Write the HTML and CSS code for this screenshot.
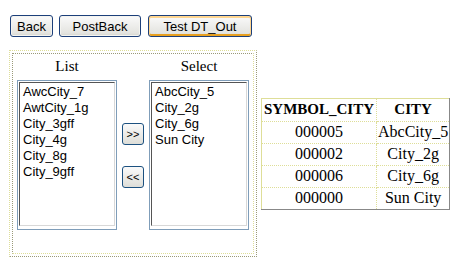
FILE: index.html
```html
<!DOCTYPE html>
<html lang="en">

<head>
    <meta charset="UTF-8">
    <title>DT_Out</title>
    <link rel="stylesheet" href="styles.css">
</head>

<body>
    <div class="toolbar">
        <button class="btn btn-back">Back</button>
        <button class="btn btn-post">PostBack</button>
        <button class="btn btn-test">Test DT_Out</button>
    </div>

    <div class="main">
        <div class="panel">
            <div class="panel-cell">
                <div class="picker">
                    <div class="column">
                        <div class="heading">List</div>
                        <div class="listbox">
                            <div class="listbox-inner">
                                <div>AwcCity_7</div>
                                <div>AwtCity_1g</div>
                                <div>City_3gff</div>
                                <div>City_4g</div>
                                <div>City_8g</div>
                                <div>City_9gff</div>
                            </div>
                        </div>
                    </div>
                    <div class="moves">
                        <button class="move">&gt;&gt;</button>
                        <button class="move">&lt;&lt;</button>
                    </div>
                    <div class="column">
                        <div class="heading">Select</div>
                        <div class="listbox">
                            <div class="listbox-inner">
                                <div>AbcCity_5</div>
                                <div>City_2g</div>
                                <div>City_6g</div>
                                <div>Sun City</div>
                            </div>
                        </div>
                    </div>
                </div>
            </div>
        </div>

        <table class="grid">
            <tr>
                <th class="col-symbol">SYMBOL_CITY</th>
                <th class="col-city">CITY</th>
            </tr>
            <tr>
                <td>000005</td>
                <td>AbcCity_5</td>
            </tr>
            <tr>
                <td>000002</td>
                <td>City_2g</td>
            </tr>
            <tr>
                <td>000006</td>
                <td>City_6g</td>
            </tr>
            <tr>
                <td>000000</td>
                <td>Sun City</td>
            </tr>
        </table>
    </div>
</body>

</html>
```

FILE: styles.css
```css
body {
    margin: 0;
    padding: 15px 0 0 10px;
    background-color: #ffffff;
    font-family: "Liberation Sans", Arial, sans-serif;
    color: #000000;
}

.toolbar {
    display: flex;
    align-items: center;
}

.btn {
    height: 22px;
    margin: 0 6px 0 0;
    padding: 0;
    font-family: "Liberation Sans", Arial, sans-serif;
    font-size: 13px;
    color: #000000;
    border: 1px solid #1c3f7a;
    border-radius: 3px;
    background: linear-gradient(#fafafa, #e4e4e0 85%, #d4d4cc);
    box-shadow: inset 0 0 0 1px #f4f4f0;
}

.btn-back {
    width: 43px;
}

.btn-post {
    width: 82px;
    margin-right: 7px;
}

.btn-test {
    width: 104px;
    box-shadow: inset 0 1px 0 1px #ffd690, inset 0 -1px 0 1px #e8a020;
}

.main {
    display: flex;
    align-items: center;
    margin: 13px 0 0 -1px;
}

.panel {
    width: 242px;
    height: 201px;
    padding: 2px;
    border: 1px dotted;
    border-color: #dede98 #9a9a78 #9a9a78 #dede98;
}

.panel-cell {
    height: 196px;
    padding: 3px 4px 0 4px;
    border: 1px dotted;
    border-color: #9a9a78 #dede98 #dede98 #9a9a78;
}

.picker {
    display: flex;
}

.column {
    display: flex;
    flex-direction: column;
    align-items: center;
}

.heading {
    font-family: "Liberation Serif", "Times New Roman", serif;
    font-size: 15px;
    line-height: 18px;
    margin-bottom: 5px;
}

.listbox {
    width: 98px;
    height: 148px;
    border: 1px solid #7f9db9;
}

.listbox-inner {
    height: 141px;
    padding: 1px 0 0 3px;
    margin: 1px;
    border: 1px solid;
    border-color: #555555 #d8d8d8 #d8d8d8 #555555;
    font-size: 13px;
    line-height: 16px;
}

.moves {
    display: flex;
    flex-direction: column;
    justify-content: center;
    gap: 21px;
    margin: 23px 5px 0 5px;
}

.move {
    width: 22px;
    height: 22px;
    padding: 0;
    font-family: "Liberation Sans", Arial, sans-serif;
    font-size: 11px;
    color: #000000;
    border: 1px solid #1c5180;
    border-radius: 3px;
    background: linear-gradient(#fafafa, #deded8);
}

.grid {
    margin-left: 4px;
    border-collapse: collapse;
    border: 1px solid;
    border-color: #dede98 #888888 #888888 #dede98;
    font-family: "Liberation Serif", "Times New Roman", serif;
}

.grid th,
.grid td {
    height: 21px;
    padding: 0 1px;
    text-align: center;
    border: 1px dotted #dede98;
}

.grid th {
    height: 22px;
    font-size: 15px;
    font-weight: bold;
}

.grid td {
    font-size: 16px;
}

.col-symbol {
    width: 112px;
}

.col-city {
    width: 70px;
}
```
